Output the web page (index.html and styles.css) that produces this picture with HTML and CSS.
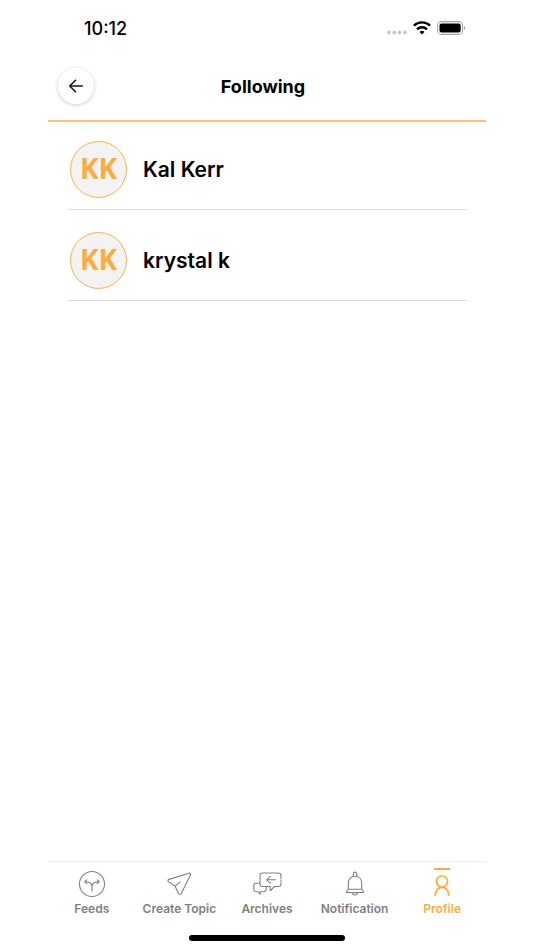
FILE: index.html
```html
<!DOCTYPE html>
<html lang="en">
<head>
<meta charset="utf-8">
<meta name="viewport" content="width=device-width, initial-scale=1">
<title>Following</title>
<link rel="stylesheet" href="styles.css">
</head>
<body>
<div class="app">
  <div class="status">
    <time class="clock">10:12</time>
    <div class="indicators">
      <svg width="20" height="14" viewBox="0 0 20 14" fill="#c9c9c9"><circle cx="2" cy="11.500" r="1.9"/><circle cx="7.3" cy="11.500" r="1.9"/><circle cx="12.6" cy="11.500" r="1.9"/><circle cx="17.9" cy="11.500" r="1.9"/></svg>
      <svg width="18" height="14" viewBox="0 0 18 14" fill="none" stroke="#000" stroke-width="2.4"><path d="M.9 4.700a11.6 11.6 0 0 1 16.2 0"/><path d="M4 8.300a7.2 7.2 0 0 1 10 0"/><path d="M9 13.4 6.5 10.9a3.6 3.6 0 0 1 5 0z" fill="#000" stroke="none"/></svg>
      <svg width="29" height="14" viewBox="0 0 29 14"><rect x=".6" y=".6" width="25" height="12.8" rx="4" fill="none" stroke="#a3a3a3" stroke-width="1.1"/><rect x="2.5" y="2.5" width="21.2" height="9" rx="2" fill="#000"/><path d="M27 5v4c1.5-.5 1.5-3.500 0-4z" fill="#a3a3a3"/></svg>
    </div>
  </div>
  <header class="header">
    <button class="back" type="button" aria-label="Back">
      <svg width="16" height="16" viewBox="0 0 16 16" fill="none" stroke="#1c1c1c" stroke-width="1.6"><path d="M14.800 8H2M8 1.800 1.800 8 8 14.200"/></svg>
    </button>
    <h1 class="title">Following</h1>
  </header>
  <main class="main">
    <ul class="people">
      <li class="person"><span class="avatar">KK</span><span class="name">Kal Kerr</span></li>
      <li class="person"><span class="avatar">KK</span><span class="name">krystal k</span></li>
    </ul>
  </main>
  <nav class="tabs">
    <a class="tab" href="#feeds">
      <svg class="icon" width="30" height="30" viewBox="0 0 30 30"><circle cx="15" cy="15" r="12.500"/><path d="M15 22v-4.500c0-3.500-2.500-4.800-7-4.800M15 17.500c0-3.500 2.500-4.800 7-4.800M9.700 10.800l-2 1.900 2.200 1.900M20.300 10.800l2 1.900-2.200 1.900"/></svg>
      <span>Feeds</span>
    </a>
    <a class="tab" href="#create">
      <svg class="icon" width="30" height="30" viewBox="0 0 30 30"><path d="M25 4.200 5 10.400c-1.200.4-1.400 1.800-.4 2.500l6.400 4.200 3.500 7.500c.5 1.100 2 1.100 2.600.1L26.300 6.200c.6-1.100-.1-2.400-1.300-2zM11 17.100l5.200-4.300"/></svg>
      <span>Create Topic</span>
    </a>
    <a class="tab" href="#archives">
      <svg class="icon" width="30" height="30" viewBox="0 0 30 30"><path d="M29 9.800V6.500A2.500 2.500 0 0 0 26.500 4h-16A2.500 2.500 0 0 0 8 6.500V15a2.500 2.500 0 0 0 2.500 2.500h7.700v4.300l4.200-4.300h4.100A2.500 2.500 0 0 0 29 15v-1.700M29 11v1M23.500 10.800h-8.700M18.300 7.300l-3.600 3.500 3.600 3.500M8 14.300H4A2.200 2.200 0 0 0 1.800 16.500v4A2.200 2.200 0 0 0 4 22.700h1.800l2.400 2.500v-2.500H12a2.200 2.200 0 0 0 2.200-2.200v-3"/></svg>
      <span>Archives</span>
    </a>
    <a class="tab" href="#notification">
      <svg class="icon" width="30" height="30" viewBox="0 0 30 30"><path d="M13.300 7.500V4.800a1.700 1.700 0 0 1 3.400 0v2.700M8.300 20.300V14c0-4 2.700-6.700 6.700-6.700s6.700 2.700 6.700 6.700v6.300M8.300 20.300h13.400c0 .8 1.800 1.200 1.800 3.200h-17c0-2 1.800-2.400 1.800-3.200zM12.500 23.800c.4 3 4.600 3 5 0"/></svg>
      <span>Notification</span>
    </a>
    <a class="tab tab-active" href="#profile" aria-current="page">
      <svg class="icon" width="30" height="30" viewBox="0 0 30 30"><circle cx="15" cy="12.500" r="5.500"/><path d="M8.300 26.200c0-10.500 13.400-10.500 13.400 0"/></svg>
      <span>Profile</span>
    </a>
  </nav>
  <div class="home"></div>
</div>
</body>
</html>
```
FILE: styles.css
```css
* { box-sizing: border-box; }
body {
  margin: 0;
  background: #fff;
  color: #000;
  font-family: Inter, "Liberation Sans", sans-serif;
}
.app {
  display: flex;
  flex-direction: column;
  min-height: 100vh;
  margin: 0 9%;
}
.status {
  display: flex;
  align-items: center;
  justify-content: space-between;
  height: 56px;
  padding: 0 20px 0 36px;
}
.clock {
  font-size: 18px;
  font-weight: 500;
}
.indicators {
  display: flex;
  gap: 6px;
}
.header {
  display: grid;
  grid-template-columns: 36px 1fr 36px;
  align-items: center;
  height: 66px;
  padding: 0 18px 4px 10px;
  border-bottom: 2px solid #fcc27c;
}
.back {
  display: grid;
  place-items: center;
  width: 36px;
  height: 36px;
  padding: 0;
  border: 0;
  border-radius: 50%;
  background: #fff;
  box-shadow: 0 1px 4px rgba(0, 0, 0, .2);
}
.title {
  margin: 0;
  font-size: 18px;
  font-weight: 700;
  text-align: center;
}
.main {
  flex: 1;
}
.people {
  display: flex;
  flex-direction: column;
  gap: 3px;
  margin: 0 19px;
  padding: 0;
  list-style: none;
}
.person {
  display: flex;
  align-items: center;
  gap: 16px;
  padding: 19px 3px 11px;
  border-bottom: 1px solid #dedede;
}
.avatar {
  display: grid;
  place-items: center;
  width: 57px;
  height: 57px;
  padding-bottom: 4px;
  border: 1px solid #fdb04e;
  border-radius: 50%;
  background: #f3f3f3;
  color: #ffab3d;
  font-family: "Open Sans", sans-serif;
  font-size: 28px;
  line-height: 40px;
  font-weight: 700;
}
.name {
  font-size: 21px;
  font-weight: 600;
}
.tabs {
  display: grid;
  grid-template-columns: repeat(5, 1fr);
  height: 74px;
  border-top: 1px solid #f0f0f0;
}
.tab {
  position: relative;
  display: flex;
  flex-direction: column;
  align-items: center;
  gap: 2px;
  padding-top: 7px;
  color: #808080;
  font-size: 12px;
  line-height: 16px;
  font-weight: 600;
  text-decoration: none;
  white-space: nowrap;
}
.tab-active {
  color: #ffab3d;
}
.tab-active::before {
  content: "";
  position: absolute;
  top: 6px;
  width: 16px;
  height: 2px;
  background: currentColor;
}
.icon {
  fill: none;
  stroke: currentColor;
  stroke-width: 1.100;
  stroke-linecap: round;
  stroke-linejoin: round;
}
.tab-active .icon {
  stroke-width: 1.700;
}
.home {
  align-self: center;
  width: 156px;
  height: 6px;
  margin-bottom: 9px;
  border-radius: 3px;
  background: #000;
}
```
